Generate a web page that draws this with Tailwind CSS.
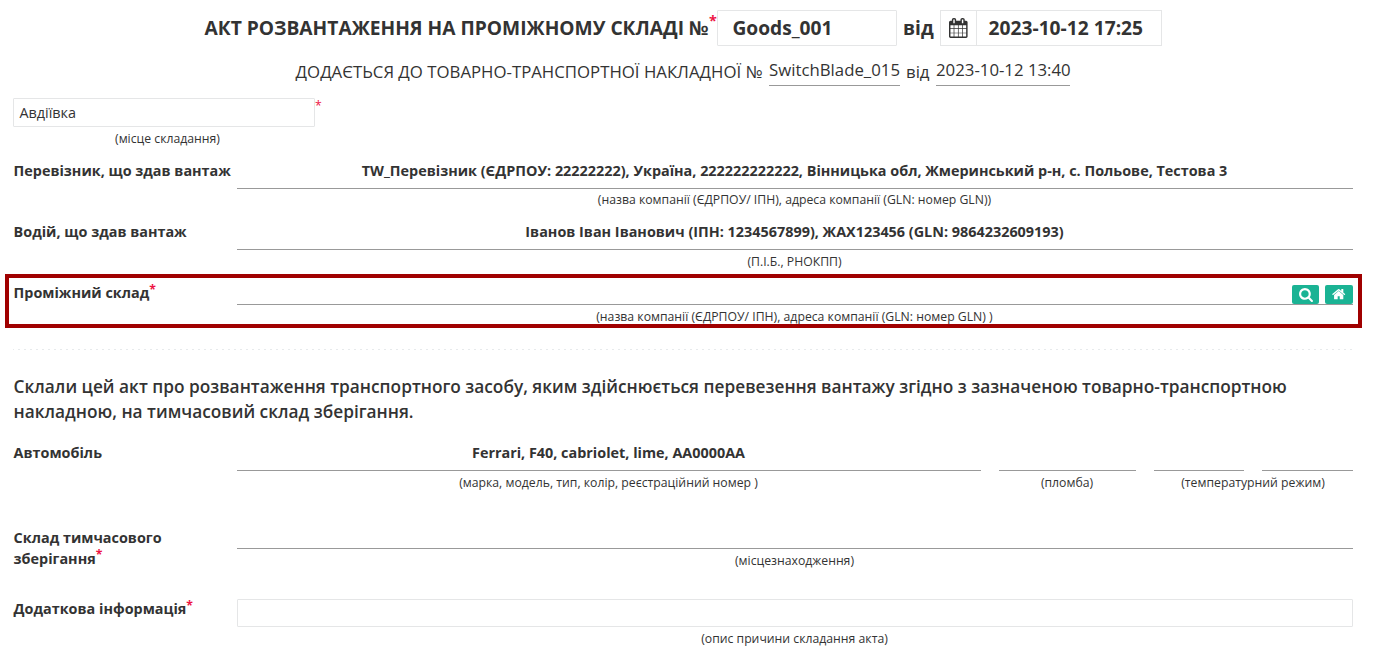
<!DOCTYPE html>
<html lang="uk">
<head>
<meta charset="utf-8">
<title>Акт розвантаження</title>
<script src="https://cdn.jsdelivr.net/npm/@tailwindcss/browser@4"></script>
</head>
<body class="bg-white text-[#333] font-['Open_Sans',sans-serif] text-[14.4px] overflow-hidden">
<main class="w-[1377px] h-[667px] flex flex-col">

  <header class="mt-[10px] h-9 pl-[204.5px] flex items-center text-[19.2px] font-bold whitespace-nowrap">
    <h1 class="w-[504.5px]">АКТ РОЗВАНТАЖЕННЯ НА ПРОМІЖНОМУ СКЛАДІ №</h1>
    <span class="w-2 h-9 text-[#ed1344] text-[14.4px] leading-[22px]">*</span>
    <div class="w-[180px] h-9 border border-[#e5e6e7] rounded-[1px] pl-[14.4px] leading-[34px]">Goods_001</div>
    <span class="w-[43px] pl-[6px]">від</span>
    <div class="w-[222px] h-9 border border-[#e5e6e7] flex items-center">
      <span class="w-9 h-full border-r border-[#e5e6e7] flex items-center justify-center">
        <svg class="w-[18.6px] h-5" viewBox="0 0 1664 1792" fill="currentColor"><path d="M128 1664h288v-288h-288v288zm352 0h320v-288h-320v288zm-352-352h288v-320h-288v320zm352 0h320v-320h-320v320zm-352-384h288v-288h-288v288zm736 736h320v-288h-320v288zm-384-736h320v-288h-320v288zm768 736h288v-288h-288v288zm-384-352h320v-320h-320v320zm-352-864v-288q0-13-9.5-22.5t-22.5-9.5h-64q-13 0-22.5 9.5t-9.5 22.5v288q0 13 9.5 22.5t22.5 9.5h64q13 0 22.5-9.5t9.5-22.5zm736 864h288v-320h-288v320zm-384-384h320v-288h-320v288zm384 0h288v-288h-288v288zm32-480v-288q0-13-9.5-22.5t-22.5-9.5h-64q-13 0-22.5 9.5t-9.5 22.5v288q0 13 9.5 22.5t22.5 9.5h64q13 0 22.5-9.5t9.5-22.5zm384-64v1280q0 52-38 90t-90 38h-1408q-52 0-90-38t-38-90v-1280q0-52 38-90t90-38h128v-96q0-66 47-113t113-47h64q66 0 113 47t47 113v96h384v-96q0-66 47-113t113-47h64q66 0 113 47t47 113v96h128q52 0 90 38t38 90z"/></svg>
      </span>
      <span class="pl-[11.6px]">2023-10-12 17:25</span>
    </div>
  </header>

  <div class="mt-[10px] h-[30px] pl-[295px] flex text-[16.8px] whitespace-nowrap">
    <span class="w-[474px] pl-[0.6px] leading-8">ДОДАЄТЬСЯ ДО ТОВАРНО-ТРАНСПОРТНОЇ НАКЛАДНОЇ №</span>
    <span class="w-[131px] h-[30px] border-b border-[#999] leading-7">SwitchBlade_015</span>
    <span class="w-9 pl-1.5 leading-8">від</span>
    <span class="w-[134px] h-[30px] border-b border-[#999] leading-7">2023-10-12 13:40</span>
  </div>

  <div class="mt-3 h-[52px] ml-[13px]">
    <div class="flex">
      <div class="w-[302px] h-[29px] border border-[#e5e6e7] rounded-[1px] pl-[5.4px] leading-[28px]">Авдіївка</div>
      <span class="text-[12.24px] leading-4 text-[#ed1344]">*</span>
    </div>
    <div class="w-[309px] text-center text-[12.24px] leading-6">(місце складання)</div>
  </div>

  <section class="mt-[11px] h-[61px] pl-[13px] pr-6 grid grid-cols-[224px_1fr]">
    <div class="pl-[0.6px] font-bold leading-5">Перевізник, що здав вантаж</div>
    <div class="text-center">
      <div class="h-7 border-b border-[#999] font-bold leading-5 pr-px">TW_Перевізник (ЄДРПОУ: 22222222), Україна, 222222222222, Вінницька обл, Жмеринський р-н, с. Польове, Тестова 3</div>
      <div class="text-[12.24px] leading-[22px] pr-px">(назва компанії (ЄДРПОУ/ ІПН), адреса компанії (GLN: номер GLN))</div>
    </div>
  </section>

  <section class="h-[52px] pl-[13px] pr-6 grid grid-cols-[224px_1fr]">
    <div class="pl-[0.6px] font-bold leading-5">Водій, що здав вантаж</div>
    <div class="text-center">
      <div class="h-7 border-b border-[#999] font-bold leading-5 pr-px">Іванов Іван Іванович (ІПН: 1234567899), ЖАХ123456 (GLN: 9864232609193)</div>
      <div class="text-[12.24px] leading-6 pr-px">(П.І.Б., РНОКПП)</div>
    </div>
  </section>

  <section class="ml-[5px] w-[1357px] h-[54px] border-4 border-[#a00000] pl-1 pr-[5px] grid grid-cols-[224px_1fr]">
    <div class="pl-[0.6px] pt-[5px] font-bold leading-5 flex">Проміжний склад<span class="text-[12.24px] leading-[14px] text-[#ed1344]">*</span></div>
    <div>
      <div class="h-[27px] border-b border-[#999] flex justify-end items-end gap-[6px]">
        <button class="w-[27px] h-[19px] bg-[#1ab394] rounded-[2px] flex items-start justify-center pt-[2px] text-white">
          <svg class="w-[14px] h-[15px]" viewBox="0 0 1664 1792" fill="currentColor"><path d="M1152 832q0-185-131.5-316.5t-316.5-131.5-316.5 131.5-131.5 316.5 131.5 316.5 316.5 131.5 316.5-131.5 131.5-316.5zm512 832q0 52-38 90t-90 38q-54 0-90-38l-343-342q-179 124-399 124-143 0-273.5-55.5t-225-150-150-225-55.5-273.5 55.5-273.5 150-225 225-150 273.5-55.5 273.5 55.5 225 150 150 225 55.5 273.5q0 220-124 399l343 343q37 37 37 90z"/></svg>
        </button>
        <button class="w-7 h-[19px] bg-[#1ab394] rounded-[2px] flex items-start justify-center pt-[2px] text-white">
          <svg class="w-[13.4px] h-[14.4px]" viewBox="0 0 1664 1792" fill="currentColor"><path d="M1408 992v480q0 26-19 45t-45 19h-384v-384h-256v384h-384q-26 0-45-19t-19-45v-480q0-1 .5-3t.5-3l575-474 575 474q1 2 1 6zm223-69l-62 74q-8 9-21 11h-3q-13 0-21-7l-692-577-692 577q-12 8-24 7-13-2-21-11l-62-74q-8-10-7-23.5t11-21.5l719-599q32-26 76-26t76 26l244 204v-195q0-14 9-23t23-9h192q14 0 23 9t9 23v408l219 182q10 8 11 21.5t-7 23.5z"/></svg>
        </button>
      </div>
      <div class="text-center text-[12.24px] leading-[23px] h-[19px] pr-px">(назва компанії (ЄДРПОУ/ ІПН), адреса компанії (GLN: номер GLN) )</div>
    </div>
  </section>

  <div class="mt-[21px] ml-[13px] w-[1340px] h-px bg-[repeating-linear-gradient(to_right,#e7eaec_0_1px,transparent_1px_5px,#e7eaec_5px_6px)]"></div>

  <p class="mt-6 ml-[13.6px] w-[1300px] h-[50px] text-[17.28px] leading-[25px] font-semibold">Склали цей акт про розвантаження транспортного засобу, яким здійснюється перевезення вантажу згідно з зазначеною товарно-транспортною<br>накладною, на тимчасовий склад зберігання.</p>

  <section class="mt-[19px] h-[84px] pl-[13px] pr-6 grid grid-cols-[224px_744px_137px_199px] text-center">
    <div class="pl-[0.6px] font-bold leading-5 text-left">Автомобіль</div>
    <div>
      <div class="h-7 border-b border-[#999] font-bold leading-5 pr-px">Ferrari, F40, cabriolet, lime, AA0000AA</div>
      <div class="text-[12.24px] leading-6 pr-px">(марка, модель, тип, колір, реєстраційний номер )</div>
    </div>
    <div class="ml-[18px] w-[137px]">
      <div class="h-7 border-b border-[#999]"></div>
      <div class="text-[12.24px] leading-6 pr-px">(пломба)</div>
    </div>
    <div class="ml-9 w-[199px]">
      <div class="h-7 flex justify-between">
        <span class="w-[90px] border-b border-[#999]"></span>
        <span class="w-[91px] border-b border-[#999]"></span>
      </div>
      <div class="text-[12.24px] leading-6 pr-px">(температурний режим)</div>
    </div>
  </section>

  <section class="h-[72px] pl-[13px] pr-6 grid grid-cols-[224px_1fr]">
    <div class="pl-[0.6px] font-bold leading-[21px]">Склад тимчасового<div class="flex">зберігання<span class="text-[12.24px] leading-[14px] text-[#ed1344]">*</span></div></div>
    <div>
      <div class="h-[22px] border-b border-[#999]"></div>
      <div class="text-center text-[12.24px] leading-6 pr-px">(місцезнаходження)</div>
    </div>
  </section>

  <section class="h-[60px] pl-[13px] pr-6 grid grid-cols-[224px_1fr]">
    <div class="pl-[0.6px] font-bold leading-5 flex">Додаткова інформація<span class="text-[12.24px] leading-[14px] text-[#ed1344]">*</span></div>
    <div>
      <div class="h-7 border border-[#e5e6e7] rounded-[1px]"></div>
      <div class="text-center text-[12.24px] leading-[23px] pr-px">(опис причини складання акта)</div>
    </div>
  </section>
</main>
</body>
</html>
